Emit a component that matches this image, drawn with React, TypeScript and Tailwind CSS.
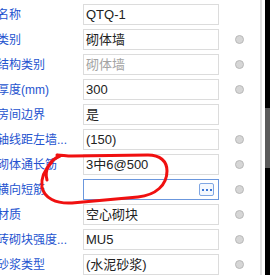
import React from 'react';

type Row = {
  label: string;
  value: string;
  radio?: boolean;
  disabled?: boolean;
  focused?: boolean;
};

const rows: Row[] = [
  { label: '名称', value: 'QTQ-1' },
  { label: '类别', value: '砌体墙', radio: true },
  { label: '结构类别', value: '砌体墙', radio: true, disabled: true },
  { label: '厚度(mm)', value: '300', radio: true },
  { label: '房间边界', value: '是' },
  { label: '轴线距左墙...', value: '(150)', radio: true },
  { label: '砌体通长筋', value: '3中6@500', radio: true },
  { label: '横向短筋', value: '', radio: true, focused: true },
  { label: '材质', value: '空心砌块', radio: true },
  { label: '砖砌块强度...', value: 'MU5', radio: true },
  { label: '砂浆类型', value: '(水泥砂浆)', radio: true },
];

const font = { fontFamily: '"Liberation Sans", "Noto Sans CJK SC", sans-serif' };

const PropertyRow = ({ row }: { row: Row }) => (
  <div className="flex items-center h-[25px] shrink-0">
    <div className="w-[83px] shrink-0 overflow-hidden">
      <span className="block -ml-[3px] whitespace-nowrap text-[12px] text-[#2453cf]">{row.label}</span>
    </div>
    <div
      className={`w-[136px] h-[21px] shrink-0 flex items-center pl-[2px] pr-[4px] border bg-white ${
        row.focused ? 'border-[#6b97dd]' : 'border-[#dcdcdc]'
      }`}
    >
      <span
        className={`flex-1 whitespace-nowrap text-[13px] leading-none ${
          row.disabled ? 'text-[#a3a3a3]' : 'text-[#222]'
        }`}
      >
        {row.value}
      </span>
      {row.focused && (
        <div className="w-[15px] h-[13px] rounded-[2px] border border-[#7fa6e3] bg-[#f4f8fe] flex items-center justify-center gap-[2px]">
          <span className="w-[2px] h-[2px] bg-[#3b76d6]" />
          <span className="w-[2px] h-[2px] bg-[#3b76d6]" />
          <span className="w-[2px] h-[2px] bg-[#3b76d6]" />
        </div>
      )}
    </div>
    {row.radio && (
      <div className="ml-[16px] w-[9px] h-[9px] rounded-full bg-[#d6d6d6] border border-[#b9b9b9]" />
    )}
  </div>
);

const App = () => {
  return (
    <div className="relative w-[270px] h-[275px] overflow-hidden bg-white flex" style={font}>
      {/* Property grid */}
      <div className="w-[259px] shrink-0 flex flex-col">
        <div className="h-[3px] bg-[#ebebeb]" />
        <div className="pt-[2px] flex flex-col">
          {rows.map((row, i) => (
            <PropertyRow key={i} row={row} />
          ))}
        </div>
      </div>

      {/* Edge + scrollbar */}
      <div className="ml-[1px] w-[2px] bg-[#e2e2e2]" />
      <div className="w-[3px]" />
      <div className="w-[5px] bg-black flex flex-col">
        <div className="mt-[108px] h-[60px] bg-[#5a5a5a]" />
      </div>

      {/* Red hand-drawn annotation */}
      <svg className="absolute inset-0 pointer-events-none" width="270" height="275" viewBox="0 0 270 275">
        <path
          d="M47 180 C44 170 50 160 60 156 L57 155 C62 155 66 156 72 156 L148 155 C160 155 167 161 167 171 C167 185 156 195 138 197 L72 203 C56 204 44 198 42 187 C41 179 44 170 52 162"
          fill="none"
          stroke="#f01010"
          strokeWidth="3"
          strokeLinecap="round"
          strokeLinejoin="round"
        />
      </svg>
    </div>
  );
};

export default App;
